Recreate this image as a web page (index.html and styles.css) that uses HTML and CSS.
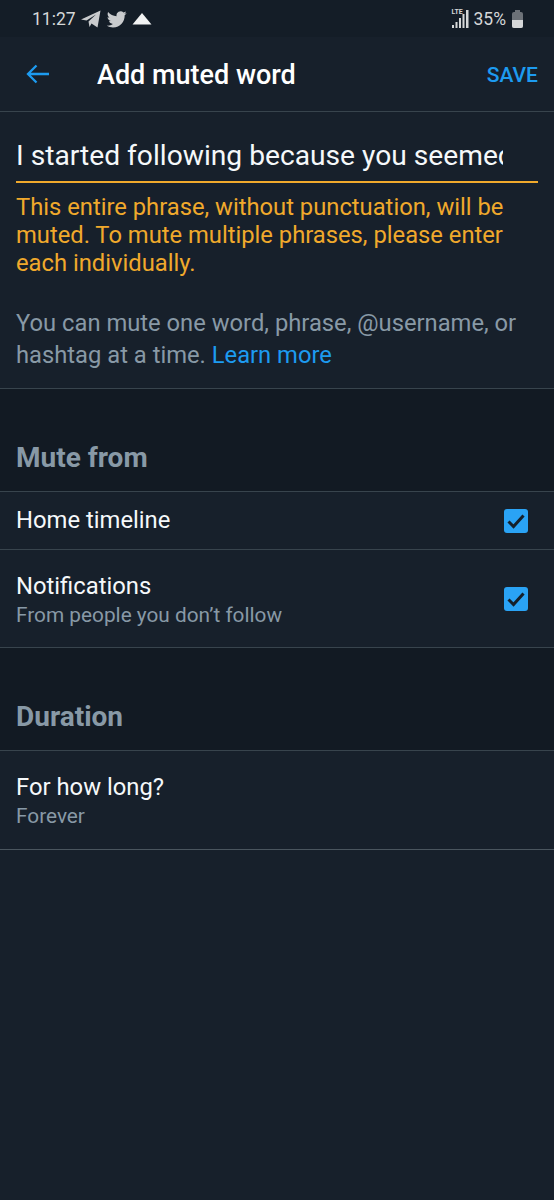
FILE: index.html
```html
<!DOCTYPE html>
<html lang="en">
<head>
<meta charset="utf-8">
<title>Add muted word</title>
<link rel="stylesheet" href="styles.css">
</head>
<body>
<div class="status">
  <div class="status-left">
    <span class="clock">11:27</span>
    <svg class="ic-tg" viewBox="0 0 20 18" width="20" height="18"><path fill="#c9cbcd" d="M0 9.500 19.500 .5 16.500 17.500 10.500 13.500 8.500 17 7.500 11.500 15 4.500 5.500 10.500Z"/></svg>
    <svg class="ic-tw" viewBox="0 0 24 24" width="20" height="20"><path fill="#c9cbcd" d="M23.600 4.900c-.9.400-1.800.600-2.800.800 1-.6 1.800-1.500 2.100-2.700-.9.600-2 1-3.100 1.200A4.900 4.900 0 0 0 11.500 8.700C7.400 8.500 3.800 6.500 1.400 3.600c-1.300 2.200-.6 5.100 1.500 6.500-.8 0-1.500-.2-2.200-.6 0 2.300 1.600 4.400 3.900 4.900-.7.200-1.500.200-2.200.100.600 2 2.400 3.400 4.600 3.400-2.100 1.600-4.700 2.300-7.300 2 2.200 1.400 4.800 2.200 7.500 2.200 9.100 0 14.300-7.700 14-14.600 1-.7 1.800-1.600 2.400-2.600Z"/></svg>
    <svg class="ic-cloud" viewBox="0 0 20 12" width="20" height="12"><path fill="#f2f3f3" d="M10 0 19.500 11.500H.5Z"/></svg>
  </div>
  <div class="status-right">
    <span class="signal">
      <span class="lte">LTE</span>
      <svg viewBox="0 0 17 18" width="17" height="18"><path fill="#d5d7d8" d="M0 15h2v3H0zM3.500 12h2v6h-2zM7 8h2v10H7zM10.500 4h2v14h-2zM14 0h2.500v18H14z"/></svg>
    </span>
    <span class="pct">35%</span>
    <span class="battery"><span class="battery-fill"></span></span>
  </div>
</div>

<header class="appbar">
  <svg class="back" viewBox="0 0 24 20" width="24" height="20"><path fill="none" stroke="#1d9bf0" stroke-width="2.300" d="M23 10H2M10.500 1.500 2 10l8.500 8.500"/></svg>
  <h1 class="title">Add muted word</h1>
  <span class="save">SAVE</span>
</header>

<section class="entry">
  <div class="field"><span class="field-text">I started following because you seemed</span></div>
  <p class="warn">This entire phrase, without punctuation, will be muted. To mute multiple phrases, please enter each individually.</p>
  <p class="help">You can mute one word, phrase, @username, or hashtag at a time. <span class="link">Learn more</span></p>
</section>

<div class="sec-head"><h2 class="sec-title">Mute from</h2></div>
<div class="row row-single">
  <span class="row-main">Home timeline</span>
  <span class="check"><svg viewBox="0 0 24 24" width="24" height="24"><path fill="none" stroke="#15202b" stroke-width="3" d="M4.500 12.500 9.500 17.500 19.500 6.500"/></svg></span>
</div>
<div class="row row-double">
  <div class="row-text"><span class="row-main">Notifications</span><span class="row-sub">From people you don’t follow</span></div>
  <span class="check"><svg viewBox="0 0 24 24" width="24" height="24"><path fill="none" stroke="#15202b" stroke-width="3" d="M4.500 12.500 9.500 17.500 19.500 6.500"/></svg></span>
</div>

<div class="sec-head"><h2 class="sec-title">Duration</h2></div>
<div class="row row-double row-last">
  <div class="row-text"><span class="row-main">For how long?</span><span class="row-sub">Forever</span></div>
</div>
</body>
</html>
```
FILE: styles.css
```css
* { box-sizing: border-box; }
html, body { margin: 0; padding: 0; }
body {
  width: 554px;
  height: 1200px;
  overflow: hidden;
  background: #17202b;
  color: #fff;
  font-family: Roboto, "Liberation Sans", sans-serif;
}
.status {
  height: 37px;
  background: #141d27;
  display: flex;
  justify-content: space-between;
  align-items: center;
  padding: 0 31px 0 32px;
  color: #d5d7d8;
  font-size: 17.500px;
}
.status-left, .status-right { display: flex; align-items: center; }
.clock { margin-right: 5px; }
.ic-tw { margin: 0 5px 0 6px; }
.signal { position: relative; display: flex; margin-right: 5px; }
.lte { position: absolute; left: 0; top: -2px; font-size: 7px; font-weight: 700; }
.battery { position: relative; width: 11px; height: 16px; background: #6d7278; border-radius: 2px; display: flex; align-items: flex-end; margin-left: 6px; margin-top: 2px; }
.battery::before { content: ""; position: absolute; left: 3px; top: -2px; width: 5px; height: 2px; background: #6d7278; }
.battery-fill { width: 100%; height: 8px; background: #d5d7d8; border-radius: 0 0 2px 2px; }
.appbar {
  height: 75px;
  display: flex;
  align-items: center;
  padding: 2px 16px 0 26px;
  border-bottom: 1px solid #38444d;
}
.back { margin-top: -2px; }
.title { font-size: 27px; font-weight: 500; margin: 0 0 0 47px; flex: 1; }
.save { color: #1d9bf0; font-size: 21px; font-weight: 500; }
.entry { padding: 0 16px; border-bottom: 1px solid #38444d; height: 277px; }
.field { height: 71px; border-bottom: 2.500px solid #f0a92c; padding-top: 25px; }
.field-text { display: block; width: 487px; overflow: hidden; white-space: nowrap; font-size: 28.200px; line-height: 38px; color: #f5f8fa; }
.warn { margin: 10px 0 0; width: 490px; font-size: 23.750px; line-height: 28px; color: #f0a92c; }
.help { margin: 30px 0 0; width: 510px; font-size: 23.750px; line-height: 32px; color: #8899a6; }
.link { color: #1d9bf0; }
.sec-head {
  height: 103px;
  background: #121a23;
  display: flex;
  align-items: flex-end;
  padding: 0 16px 17px;
  border-bottom: 1px solid #38444d;
}
.sec-title { margin: 0; font-size: 28px; font-weight: 700; color: #8899a6; }
.row { display: flex; justify-content: space-between; align-items: center; padding: 0 26px 0 16px; border-bottom: 1px solid #38444d; }
.row-single { height: 58px; }
.row-double { height: 98px; padding-top: 4px; }
.row-last { height: 99px; border-bottom-color: #4a555e; }
.row-text { display: flex; flex-direction: column; }
.row-main { font-size: 23.800px; line-height: 29px; color: #f5f8fa; }
.row-sub { font-size: 20.800px; line-height: 29px; color: #8899a6; }
.check { width: 24px; height: 24px; background: #2aa3f5; border-radius: 3px; display: flex; align-items: center; justify-content: center; }
.row-double .check { margin-top: -4px; }
```
